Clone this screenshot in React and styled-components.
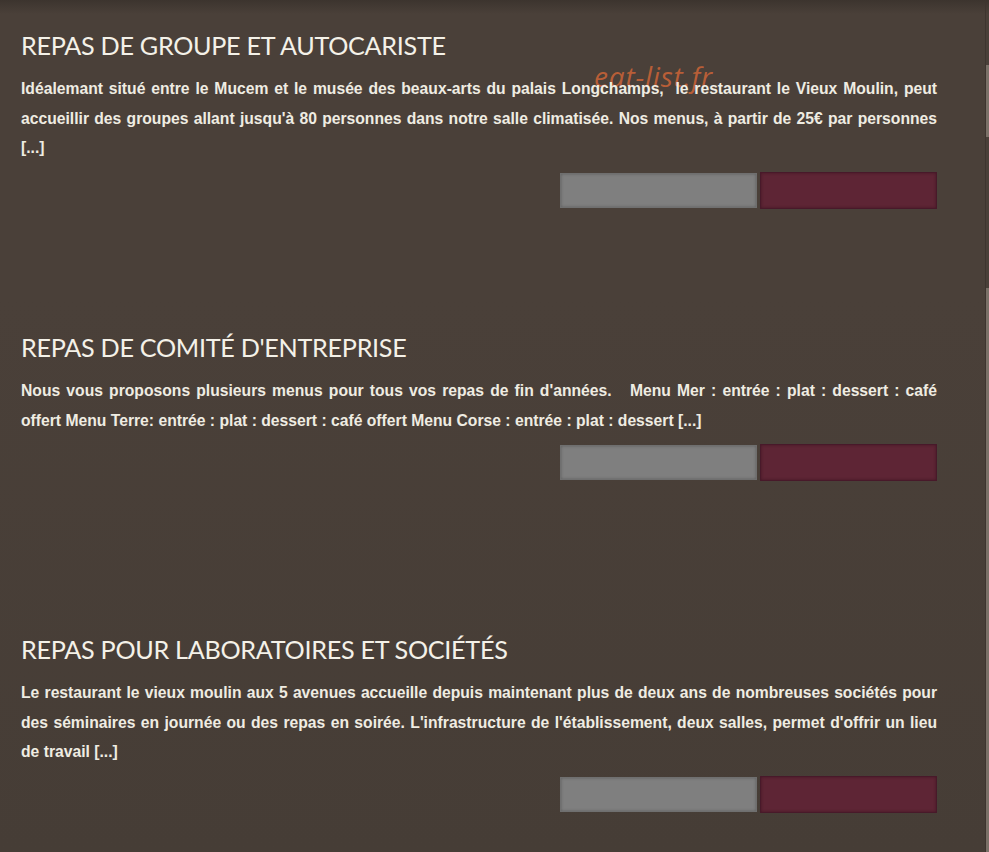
import React from 'react';
import styled, {createGlobalStyle} from 'styled-components';

const GlobalStyle = createGlobalStyle`
  html, body {
    margin: 0;
    padding: 0;
    background: #4a4039;
  }
`

const services = [
  {
    title: 'REPAS DE GROUPE ET AUTOCARISTE',
    text: "Idéalemant situé entre le Mucem et le musée des beaux-arts du palais Longchamps,\u00a0 le restaurant le Vieux Moulin, peut accueillir des groupes allant jusqu'à 80 personnes dans notre salle climatisée. Nos menus, à partir de 25€ par personnes [...]",
  },
  {
    title: "REPAS DE COMITÉ D'ENTREPRISE",
    text: "Nous vous proposons plusieurs menus pour tous vos repas de fin d'années.\u00a0\u00a0 Menu Mer : entrée : plat : dessert : café offert Menu Terre: entrée : plat : dessert : café offert Menu Corse : entrée : plat : dessert [...]",
  },
  {
    title: 'REPAS POUR LABORATOIRES ET SOCIÉTÉS',
    text: "Le restaurant le vieux moulin aux 5 avenues accueille depuis maintenant plus de deux ans de nombreuses sociétés pour des séminaires en journée ou des repas en soirée. L'infrastructure de l'établissement, deux salles, permet d'offrir un lieu de travail [...]",
  },
];

const App = () => {
  return (
    <Page>
      <GlobalStyle />
      <Main>
        <Watermark>eat-list.fr</Watermark>
        {services.map((s, i) => (
          <Section key={`service ${i}`}>
            <Title>{s.title}</Title>
            <Text>{s.text}</Text>
            <Actions>
              <Button />
              <Button $primary />
            </Actions>
          </Section>
        ))}
      </Main>
      <Rail>
        <RailPiece $h={65} />
        <RailPiece $h={72} $lit />
        <RailPiece $h={151} />
        <RailPiece $lit $grow />
      </Rail>
    </Page>
  )
}

export default App;

const Page = styled.div`
  display: flex;
  width: 100%;
  height: 852px;
  background: linear-gradient(to bottom, #3c342e 0px, #4a4039 14px, #4a4039 300px, #463d36 852px);
  overflow: hidden;
`

const Main = styled.main`
  position: relative;
  flex: 1;
  display: flex;
  flex-direction: column;
`

const Section = styled.section`
  flex: none;
  height: 302px;
  box-sizing: border-box;
  padding: 28px 48px 0 21px;

  display: flex;
  flex-direction: column;
`

const Title = styled.h2`
  margin: 0;
  font-family: Lato, "Open Sans", sans-serif;
  font-weight: 400;
  font-size: 25.2px;
  line-height: 34px;
  letter-spacing: -0.3px;
  color: #f4f1e8;
`

const Text = styled.p`
  position: relative;
  margin: 12px 0 0;
  font-family: "Liberation Sans", Arial, sans-serif;
  font-weight: 700;
  font-size: 15.7px;
  line-height: 29.5px;
  text-align: justify;
  color: #efece2;
`

const Actions = styled.div`
  margin-top: 9px;
  display: flex;
  justify-content: flex-end;
  align-items: center;
  gap: 3px;
`

const Button = styled.div`
  box-sizing: border-box;
  width: ${p => p.$primary ? '177px' : '197px'};
  height: ${p => p.$primary ? '37px' : '35px'};
  background: ${p => p.$primary ? '#5e2535' : '#7f7f7f'};
  border: 1px solid ${p => p.$primary ? '#48192a' : '#6f6f6f'};
  box-shadow: inset 0 0 3px ${p => p.$primary ? 'rgba(40, 10, 20, .5)' : 'rgba(60, 60, 60, .5)'};
`

const Watermark = styled.span`
  position: absolute;
  left: 594px;
  top: 57px;
  font-family: "Open Sans", sans-serif;
  font-style: italic;
  font-size: 28px;
  letter-spacing: 0.8px;
  color: rgba(205, 100, 55, .85);
  pointer-events: none;
`

const Rail = styled.div`
  width: 3px;
  display: flex;
  flex-direction: column;
  border-left: 1px solid #3e352f;
`

const RailPiece = styled.div`
  height: ${p => p.$h ? `${p.$h}px` : 'auto'};
  flex: ${p => p.$grow ? 1 : 'none'};
  background: ${p => p.$lit ? '#7b7168' : 'transparent'};
`
